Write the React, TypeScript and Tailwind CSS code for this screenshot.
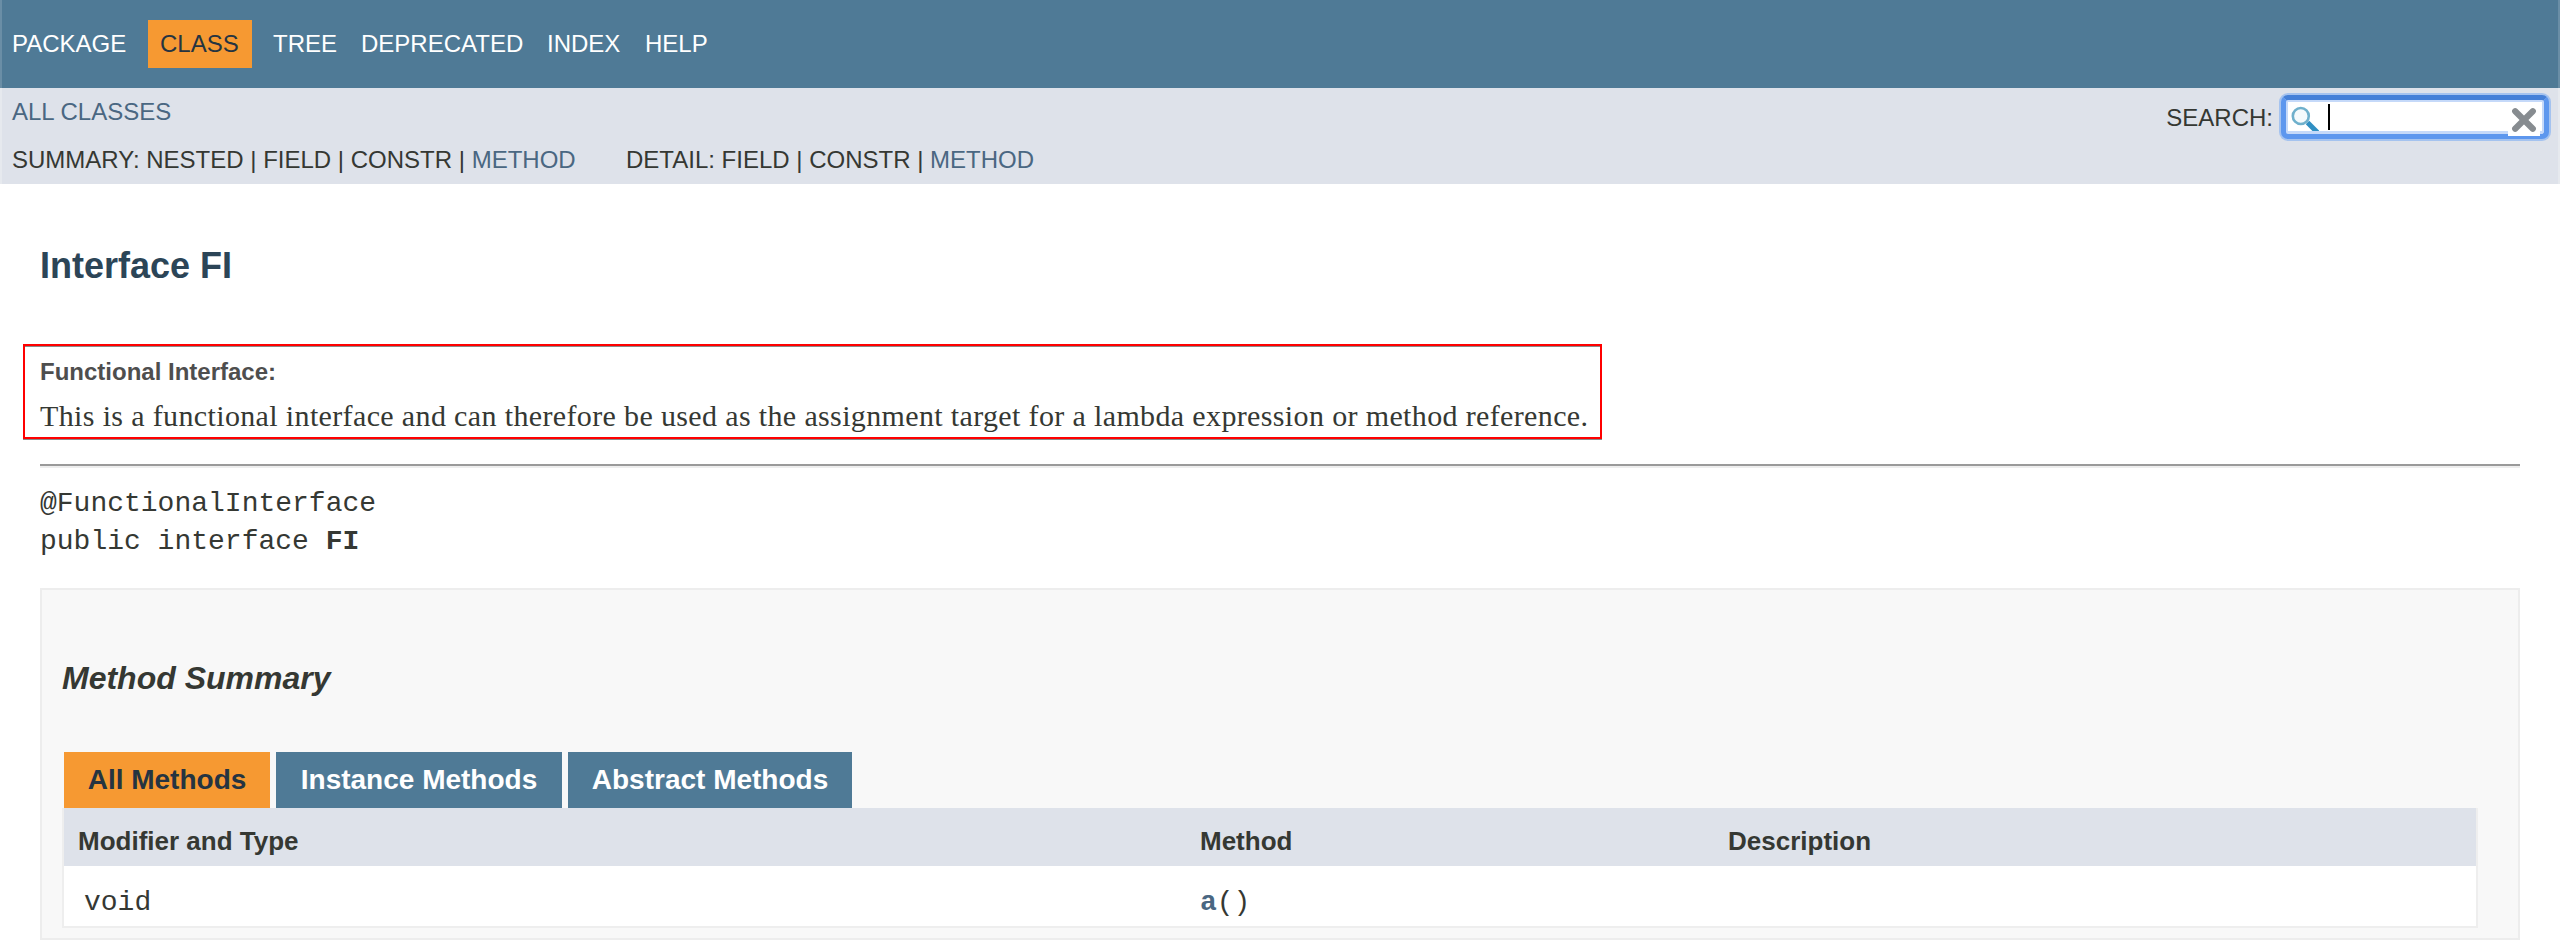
const link = "text-[#4a6782]";

function Clear() {
  return (
    <svg className="h-[34px] w-8 bg-white" viewBox="0 0 32 34">
      <path d="M7.2 9.2 24.8 26.8M24.8 9.2 7.2 26.8" stroke="#878c90" strokeWidth="6.2" strokeLinecap="round" />
    </svg>
  );
}

function Magnifier() {
  return (
    <svg className="h-[29px] w-[31px]" viewBox="0 0 31 29">
      <circle cx="12.8" cy="14" r="8" fill="#f4fafc" stroke="#6fb0cc" strokeWidth="2.6" />
      <path d="M19.5 20.5 30 31" stroke="#2f8fc3" strokeWidth="5" />
    </svg>
  );
}

export default function App() {
  return (
    <div className="h-[948px] w-[2560px] overflow-hidden bg-white font-['Liberation_Sans',sans-serif] text-[24px] leading-7 text-[#353833]">
      <nav className="flex h-[88px] items-start border-x-2 border-[#6a8ea6] bg-[#4f7a96] pt-5 text-white">
        <span className="ml-[10px] h-12 w-[136px] pt-[10px]">PACKAGE</span>
        <span className="h-12 w-[104px] bg-[#f69932] pt-[10px] pl-3 text-[#253441]">CLASS</span>
        <span className="ml-[21px] w-[88px] pt-[10px]">TREE</span>
        <span className="w-[186px] pt-[10px]">DEPRECATED</span>
        <span className="w-[98px] pt-[10px]">INDEX</span>
        <span className="pt-[10px]">HELP</span>
      </nav>
      <section className="flex h-24 justify-between border-x-2 border-[#e6e9ee] bg-[#dee2ea] pl-[10px]">
        <div className="pt-[10px]">
          <div className={link}>ALL CLASSES</div>
          <div className="mt-5 flex">
            <div className="w-[614px] whitespace-pre">SUMMARY: NESTED | FIELD | CONSTR | <span className={link}>METHOD</span></div>
            <div className="whitespace-pre">DETAIL: FIELD | CONSTR | <span className={link}>METHOD</span></div>
          </div>
        </div>
        <div className="flex items-start pr-[7px]">
          <span className="mr-[6px] pt-4">SEARCH:</span>
          <div className="mt-[5px] h-12 w-[272px] rounded-[9px] bg-[#a5c3ef] p-[2px]">
            <div className="h-11 w-[268px] rounded-[7px] border-[5px] border-[#5d97ee] border-t-[#4580d8] bg-[#c5d9f9] p-[2px]">
              <div className="flex h-[29px] w-[254px] items-start bg-white">
                <Magnifier />
                <span className="mt-[2px] ml-[9px] h-[26px] w-[2px] bg-black" />
                <span className="mr-[2px] ml-auto"><Clear /></span>
              </div>
            </div>
          </div>
        </div>
      </section>
      <main className="px-10">
        <h1 className="h-40 pt-[62px] text-[36px] leading-10 font-bold text-[#2c4557]">Interface FI</h1>
        <div className="-ml-[17px] h-[95px] w-[1579px] border-2 border-[#ff0000] pt-[14px] pl-[15px] shadow-[inset_0_1px_0_#8a8a8a,0_1px_0_#8a8a8a]">
          <div className="leading-6 font-bold text-[#4e4e4e]">Functional Interface:</div>
          <div className="mt-4 w-fit font-['Liberation_Serif',serif] text-[30px] leading-8 tracking-[0.36px] whitespace-nowrap">
            This is a functional interface and can therefore be used as the assignment target for a lambda expression or method reference.
          </div>
        </div>
        <div className="mt-[25px] h-1 border-t-2 border-b-2 border-t-[#9a9a9a] border-b-[#eeeeee]" />
        <div className="mt-[15px] h-[105px] pt-[2px] font-['Liberation_Mono',monospace] text-[28px] leading-[38px] whitespace-pre">
          <div>@FunctionalInterface</div>
          <div className="flex"><span>{"public interface "}</span><b>FI</b></div>
        </div>
        <section className="h-[352px] border-2 border-[#ededed] bg-[#f8f8f8] pr-10 pl-5">
          <h2 className="h-[162px] pt-[70px] text-[32px] leading-9 font-bold italic">Method Summary</h2>
          <div className="flex h-14 gap-[6px] pl-[2px] text-[28px] leading-8 font-bold text-white">
            <div className="w-[206px] bg-[#f69932] pt-3 text-center text-[#253441]">All Methods</div>
            <div className="w-[286px] bg-[#4f7a96] pt-3 text-center">Instance Methods</div>
            <div className="w-[284px] bg-[#4f7a96] pt-3 text-center">Abstract Methods</div>
          </div>
          <div className="border-2 border-t-0 border-[#eeeeee] bg-white">
            <div className="grid h-[58px] grid-cols-[1122px_528px_1fr] bg-[#dee2ea] pt-[18px] pl-[14px] text-[26px] leading-[30px] font-bold">
              <span>Modifier and Type</span><span>Method</span><span>Description</span>
            </div>
            <div className="grid h-[60px] grid-cols-[1116px_1fr] pt-[21px] pl-5 font-['Liberation_Mono',monospace] text-[28px] leading-8">
              <span>void</span>
              <span><b className={link}>a</b>()</span>
            </div>
          </div>
        </section>
      </main>
    </div>
  );
}
